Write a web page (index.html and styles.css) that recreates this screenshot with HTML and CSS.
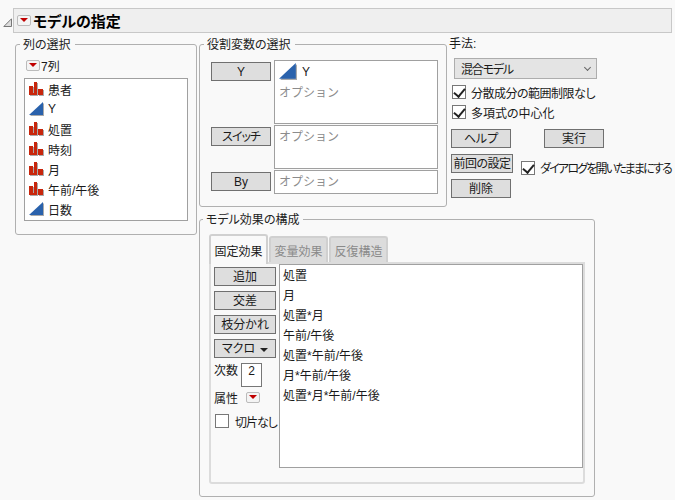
FILE: index.html
```html
<!DOCTYPE html>
<html lang="ja">

<head>
    <meta charset="UTF-8">
    <title>モデルの指定</title>
    <link rel="stylesheet" href="styles.css">
</head>

<body>
    <svg class="defs" width="0" height="0">
        <symbol id="nominal" viewBox="0 0 15 14">
            <path fill="#aaa" d="M1 5h4v9H1zM5 1h4v13H5zM10 8h5v6h-5z" />
            <path fill="#c8260c" d="M0 4h4v9H0zM5 0h3v13H5zM9 7h5v6H9z" />
            <path fill="#c8260c" d="M4 11h1v2H4z" />
        </symbol>
        <symbol id="continuous" viewBox="0 0 15 14">
            <path fill="#aaa" d="M15 1v13H1z" />
            <path fill="#2a62ac" d="M14 0v13H0z" />
        </symbol>
    </svg>

    <div class="title-row">
        <svg class="disclosure" viewBox="0 0 9 9"><path fill="#ddd" stroke="#777" d="M8.5.8v7.7H.8z" /></svg>
        <div class="title-bar">
            <span class="red-btn"></span>
            <span class="title-text">モデルの指定</span>
        </div>
    </div>

    <div class="main">
        <!-- 列の選択 -->
        <fieldset class="group columns-group">
            <legend>列の選択</legend>
            <div class="col-count"><span class="red-btn"></span>7列</div>
            <ul class="col-list">
                <li><svg class="icon"><use href="#nominal" /></svg>患者</li>
                <li><svg class="icon"><use href="#continuous" /></svg>Y</li>
                <li><svg class="icon"><use href="#nominal" /></svg>処置</li>
                <li><svg class="icon"><use href="#nominal" /></svg>時刻</li>
                <li><svg class="icon"><use href="#nominal" /></svg>月</li>
                <li><svg class="icon"><use href="#nominal" /></svg>午前/午後</li>
                <li><svg class="icon"><use href="#continuous" /></svg>日数</li>
            </ul>
        </fieldset>

        <!-- 役割変数の選択 -->
        <fieldset class="group roles-group">
            <legend>役割変数の選択</legend>
            <div class="role-row">
                <button class="btn role-btn">Y</button>
                <div class="role-box box-y">
                    <div class="role-var"><svg class="icon icon-big"><use href="#continuous" /></svg>Y</div>
                    <div class="hint">オプション</div>
                </div>
            </div>
            <div class="role-row">
                <button class="btn role-btn narrow">スイッチ</button>
                <div class="role-box box-switch"><div class="hint">オプション</div></div>
            </div>
            <div class="role-row">
                <button class="btn role-btn">By</button>
                <div class="role-box box-by"><div class="hint">オプション</div></div>
            </div>
        </fieldset>

        <!-- 手法 -->
        <div class="method">
            <div class="method-label">手法:</div>
            <div class="select"><span class="select-text">混合モデル</span><span class="chevron"></span></div>
            <label class="check tight"><span class="box checked"></span>分散成分の範囲制限なし</label>
            <label class="check"><span class="box checked"></span>多項式の中心化</label>
            <div class="actions">
                <div class="action-row gap-big">
                    <button class="btn action-btn">ヘルプ</button>
                    <button class="btn action-btn">実行</button>
                </div>
                <div class="action-row">
                    <button class="btn action-btn prev-btn">前回の設定</button>
                    <label class="check keep"><span class="box checked"></span>ダイアログを開いたままにする</label>
                </div>
                <div class="action-row">
                    <button class="btn action-btn">削除</button>
                </div>
            </div>
        </div>

        <!-- モデル効果の構成 -->
        <fieldset class="group effects-group">
            <legend>モデル効果の構成</legend>
            <div class="tabs">
                <div class="tab active">固定効果</div>
                <div class="tab">変量効果</div>
                <div class="tab">反復構造</div>
            </div>
            <div class="tab-body">
                <div class="effect-tools">
                    <button class="btn tool-btn">追加</button>
                    <button class="btn tool-btn">交差</button>
                    <button class="btn tool-btn">枝分かれ</button>
                    <button class="btn tool-btn">マクロ<span class="down"></span></button>
                    <div class="degree">次数<span class="degree-box">2</span></div>
                    <div class="attr">属性<span class="red-btn"></span></div>
                    <label class="check no-intercept"><span class="box"></span>切片なし</label>
                </div>
                <ul class="effect-list">
                    <li>処置</li>
                    <li>月</li>
                    <li>処置*月</li>
                    <li>午前/午後</li>
                    <li>処置*午前/午後</li>
                    <li>月*午前/午後</li>
                    <li>処置*月*午前/午後</li>
                </ul>
            </div>
        </fieldset>
    </div>
</body>

</html>
```

FILE: styles.css
```css
* {
    box-sizing: border-box;
}

html,
body {
    height: 100%;
}

body {
    margin: 0;
    padding: 8px 3px 0 3px;
    overflow: hidden;
    background: #f9f9f9;
    color: #1a1a1a;
    font-family: "Liberation Sans", "Noto Sans CJK JP", sans-serif;
    font-size: 12px;
    font-feature-settings: "palt";
}

ul {
    list-style: none;
    margin: 0;
    padding: 0;
}

.defs {
    display: block;
    height: 0;
}

/* タイトル */
.title-row {
    display: flex;
    align-items: center;
}

.disclosure {
    flex: none;
    width: 9px;
    height: 9px;
    margin: 3px 1px 0 0;
}

.title-bar {
    flex: 1;
    display: flex;
    align-items: center;
    height: 25px;
    padding-left: 3px;
    background: #efefef;
    border: 1px solid #c8c8c8;
}

.title-text {
    margin-left: 2px;
    font-size: 15px;
    font-weight: bold;
    color: #000;
}

.red-btn {
    position: relative;
    display: inline-block;
    flex: none;
    width: 14px;
    height: 11px;
    background: #f4f4f4;
    border: 1px solid #bbb;
    border-radius: 2px;
}

.red-btn::after {
    content: "";
    position: absolute;
    left: 2px;
    top: 2px;
    border-style: solid;
    border-width: 4px 4px 0 4px;
    border-color: #c00000 transparent transparent transparent;
}

/* 全体の配置 */
.main {
    display: grid;
    grid-template-columns: 182px 248px 1fr;
    grid-template-rows: auto auto;
    column-gap: 2px;
    margin: 3px 0 0 12px;
}

.group {
    min-width: 0;
    margin: 0;
    background: #f9f9f9;
    border: 1px solid #b0b0b0;
    border-radius: 3px;
}

.group legend {
    padding: 2px 4px 0 3px;
    line-height: 14px;
    color: #222;
}

/* 列の選択 */
.columns-group {
    grid-row: 1 / 3;
    padding: 0 8px;
    height: 199px;
    align-self: start;
}

.columns-group legend {
    margin-left: -4px;
}

.col-count {
    display: flex;
    align-items: center;
    gap: 1px;
    height: 17px;
    margin: 5px 0 4px 2px;
}

.col-list {
    height: 143px;
    background: #fff;
    border: 1px solid #a0a0a0;
}

.col-list li {
    display: flex;
    align-items: center;
    height: 20px;
    padding-left: 4px;
}

.icon {
    flex: none;
    width: 15px;
    height: 14px;
    margin-right: 4px;
}

.icon-big {
    width: 18px;
    height: 17px;
    margin-right: 5px;
}

/* 役割変数の選択 */
.roles-group {
    display: flex;
    flex-direction: column;
    gap: 1px;
    padding: 8px 8px 0 11px;
    height: 171px;
}

.roles-group legend {
    margin-left: -7px;
}

.role-row {
    display: flex;
    gap: 3px;
    align-items: flex-start;
}

.role-box {
    flex: 1;
    background: #fff;
    border: 1px solid #a0a0a0;
    padding: 4px 4px 0;
}

.box-y {
    height: 64px;
    padding-top: 2px;
}

.box-switch {
    height: 44px;
}

.box-by {
    height: 24px;
}

.role-var {
    display: flex;
    align-items: center;
    height: 17px;
    margin-bottom: 6px;
}

.hint {
    color: #8c8c8c;
    line-height: 15px;
    font-feature-settings: normal;
}

.btn {
    padding: 0;
    height: 19px;
    background: #dedede;
    border: 1px solid #707070;
    color: #1a1a1a;
    font-family: inherit;
    font-size: 12px;
    font-feature-settings: inherit;
    line-height: 16px;
}

.role-btn {
    flex: none;
    width: 60px;
    margin-top: 2px;
}

.narrow {
    letter-spacing: -1px;
}

/* 手法 */
.method {
    grid-column: 3;
    grid-row: 1 / 3;
}

.method-label {
    margin-top: 1px;
    line-height: 14px;
}

.select {
    display: flex;
    align-items: center;
    justify-content: space-between;
    width: 143px;
    height: 21px;
    margin: 7px 0 3px 5px;
    padding: 0 6px;
    background: #e4e4e4;
    border: 1px solid #adadad;
}

.select-text {
    letter-spacing: -1.2px;
}

.chevron {
    width: 5px;
    height: 5px;
    margin-bottom: 2px;
    border-right: 1px solid #666;
    border-bottom: 1px solid #666;
    transform: rotate(45deg);
}

.check {
    display: flex;
    align-items: center;
    gap: 5px;
    height: 20px;
    margin-left: 3px;
    white-space: nowrap;
}

.tight {
    letter-spacing: -0.5px;
}

.box {
    position: relative;
    flex: none;
    width: 14px;
    height: 14px;
    background: #fff;
    border: 1px solid #777;
}

.box.checked::after {
    content: "";
    position: absolute;
    left: 3px;
    top: 0;
    width: 5px;
    height: 9px;
    border-right: 2px solid #222;
    border-bottom: 2px solid #222;
    transform: rotate(40deg);
}

.actions {
    display: flex;
    flex-direction: column;
    gap: 6px;
    margin-top: 7px;
}

.action-row {
    display: flex;
    align-items: center;
    height: 19px;
    padding-left: 2px;
}

.gap-big {
    gap: 33px;
}

.action-btn {
    width: 60px;
}

.prev-btn {
    width: 62px;
    letter-spacing: -0.5px;
}

.keep {
    margin: 8px 0 0 8px;
    letter-spacing: -1.8px;
}

/* モデル効果の構成 */
.effects-group {
    grid-column: 2 / 4;
    grid-row: 2;
    width: 396px;
    height: 286px;
    margin-top: 4px;
    padding: 0 9px;
}

.effects-group legend {
    margin-left: -6px;
}

.tabs {
    display: flex;
    align-items: flex-end;
    gap: 1px;
    height: 28px;
    margin-top: 7px;
}

.tab {
    display: flex;
    align-items: center;
    justify-content: center;
    width: 59px;
    height: 26px;
    background: #dcdcdc;
    border: 2px solid #d0d0d0;
    border-bottom: none;
    border-radius: 3px 3px 0 0;
    color: #8a8a8a;
}

.tab.active {
    position: relative;
    height: 30px;
    margin-bottom: -2px;
    background: #f9f9f9;
    color: #1a1a1a;
}

.tab-body {
    display: flex;
    gap: 3px;
    height: 222px;
    padding-left: 3px;
    border: 2px solid #dcdcdc;
    border-radius: 0 0 3px 3px;
}

.effect-tools {
    width: 62px;
    flex: none;
    padding-top: 3px;
}

.tool-btn {
    display: block;
    width: 62px;
    margin-bottom: 5px;
}

.down {
    display: inline-block;
    margin-left: 5px;
    vertical-align: 1px;
    border-style: solid;
    border-width: 4px 4px 0 4px;
    border-color: #222 transparent transparent transparent;
}

.degree {
    display: flex;
    gap: 3px;
    height: 24px;
    padding-top: 1px;
    line-height: 15px;
}

.degree-box {
    width: 21px;
    height: 24px;
    margin-top: -1px;
    text-align: center;
    background: #fff;
    border: 1px solid #777;
}

.attr {
    display: flex;
    align-items: center;
    gap: 8px;
    height: 20px;
}

.no-intercept {
    margin: 4px 0 0 1px;
    gap: 6px;
    letter-spacing: -1px;
}

.effect-list {
    flex: 1;
    height: 204px;
    padding-top: 1px;
    background: #fff;
    border: 1px solid #a0a0a0;
}

.effect-list li {
    height: 20px;
    line-height: 20px;
    padding-left: 3px;
}
```
